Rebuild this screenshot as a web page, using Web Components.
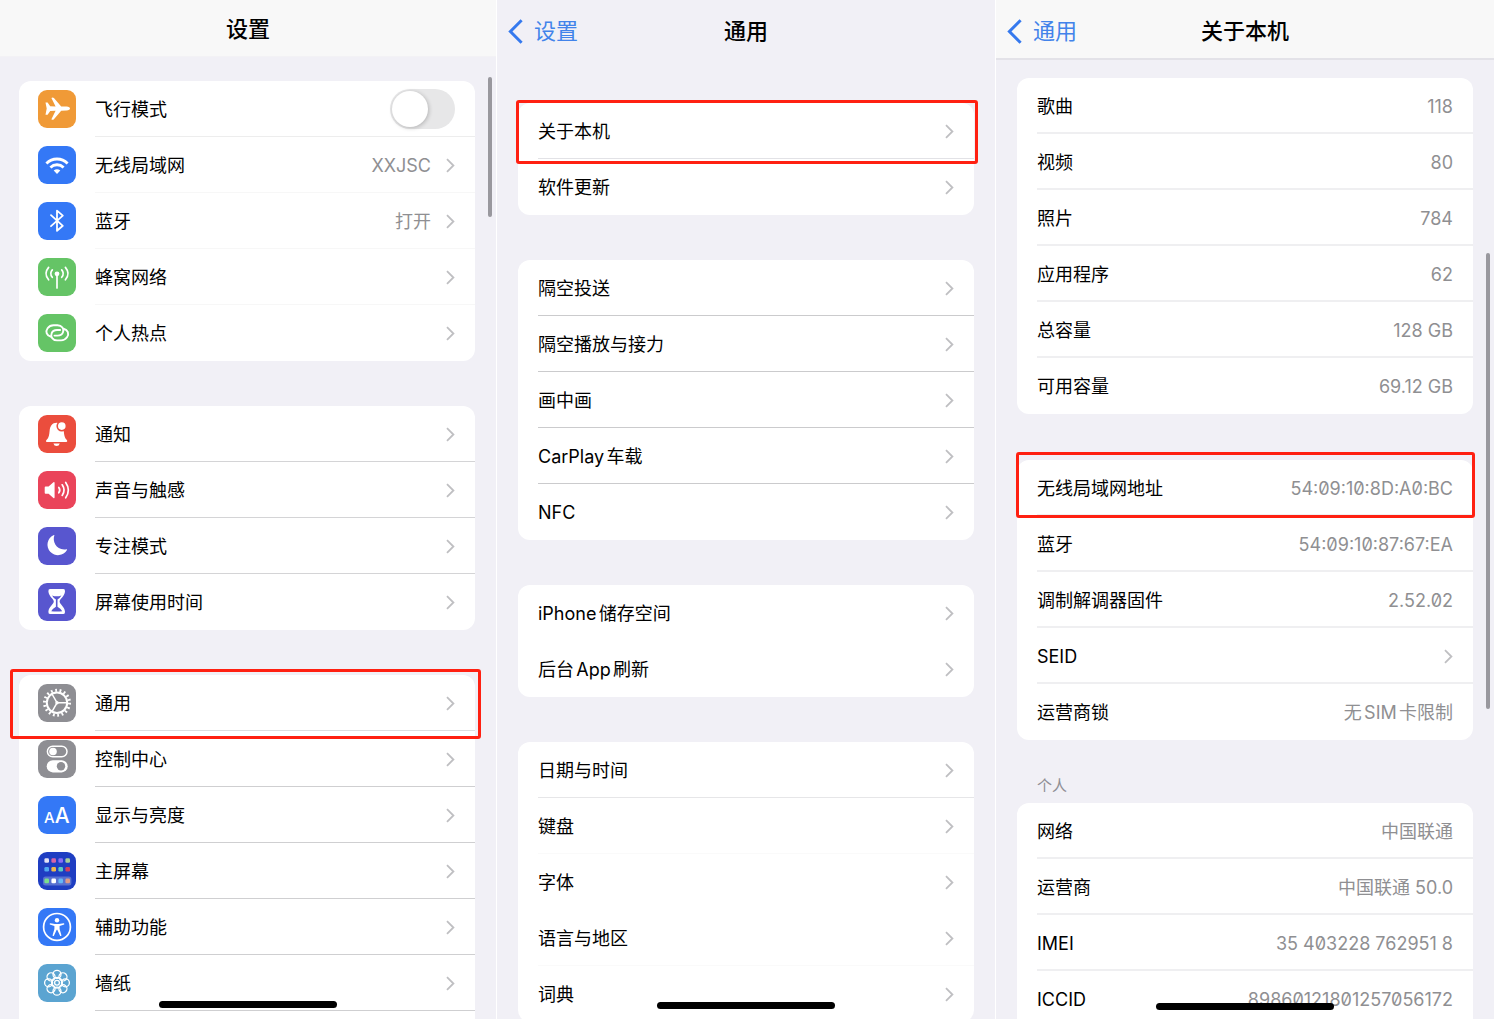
<!DOCTYPE html>
<html lang="zh-CN">
<head>
<meta charset="utf-8">
<meta name="viewport" content="width=device-width, initial-scale=1">
<title>设置</title>
<style>
  html, body { margin: 0; height: 100%; }
  body {
    background: #fff;
    color: #000;
    font-family: Inter, "Noto Sans CJK SC", sans-serif;
    font-size: 18px;
    line-height: 24px;
    text-autospace: normal;
  }
</style>
</head>
<body>
<settings-board>
  <phone-screen style="--side-start:19px; --gap:45px; --top:24px; --bar-bottom:11px; --thumb-top:77px; --thumb-height:140px; --thumb-right:4px">
    <nav-bar slot="bar" tone="plain">设置</nav-bar>
    <list-group style="--line:#f7f7f7">
      <list-row icon="plane" kind="switch" style="--line:#ededed">飞行模式</list-row>
      <list-row icon="wifi" kind="link" value="XXJSC">无线局域网</list-row>
      <list-row icon="bluetooth" kind="link" value="打开">蓝牙</list-row>
      <list-row icon="cellular" kind="link">蜂窝网络</list-row>
      <list-row icon="hotspot" kind="link">个人热点</list-row>
    </list-group>
    <list-group style="--line:#d4d4d6">
      <list-row icon="bell" kind="link">通知</list-row>
      <list-row icon="sound" kind="link">声音与触感</list-row>
      <list-row icon="moon" kind="link">专注模式</list-row>
      <list-row icon="hourglass" kind="link">屏幕使用时间</list-row>
    </list-group>
    <list-group open style="--line:#cfcfd1">
      <list-row icon="gear" kind="link" marked style="--line:#dcdcde; --mark:-6px -6px -8px -9px">通用</list-row>
      <list-row icon="control" kind="link">控制中心</list-row>
      <list-row icon="display" kind="link">显示与亮度</list-row>
      <list-row icon="home" kind="link">主屏幕</list-row>
      <list-row icon="access" kind="link">辅助功能</list-row>
      <list-row icon="wallpaper" kind="link">墙纸</list-row>
      <list-row></list-row>
    </list-group>
  </phone-screen>

  <phone-screen style="--gap:45px; --top:43px; --bar-bottom:10px; --thumb-height:0px">
    <nav-bar slot="bar" tone="clear" back="设置">通用</nav-bar>
    <list-group style="--line:#e2e2e6">
      <list-row kind="link" marked style="--mark:-3px -4px -5px -2px">关于本机</list-row>
      <list-row kind="link">软件更新</list-row>
    </list-group>
    <list-group style="--line:#cbcbcd">
      <list-row kind="link">隔空投送</list-row>
      <list-row kind="link">隔空播放与接力</list-row>
      <list-row kind="link">画中画</list-row>
      <list-row kind="link">CarPlay车载</list-row>
      <list-row kind="link">NFC</list-row>
    </list-group>
    <list-group style="--line:#fff">
      <list-row kind="link">iPhone储存空间</list-row>
      <list-row kind="link">后台App刷新</list-row>
    </list-group>
    <list-group style="--line:#fafafa">
      <list-row kind="link" style="--line:#e6e6e8">日期与时间</list-row>
      <list-row kind="link">键盘</list-row>
      <list-row kind="link" style="--line:#fff">字体</list-row>
      <list-row kind="link">语言与地区</list-row>
      <list-row kind="link">词典</list-row>
    </list-group>
  </phone-screen>

  <phone-screen style="--gap:46px; --top:18px; --bar-bottom:9px; --thumb-top:253px; --thumb-height:456px; --thumb-right:4px; --line:#efeff1; --line-size:2px">
    <nav-bar slot="bar" tone="ruled" back="通用">关于本机</nav-bar>
    <list-group>
      <list-row value="118">歌曲</list-row>
      <list-row value="80">视频</list-row>
      <list-row value="784">照片</list-row>
      <list-row value="62">应用程序</list-row>
      <list-row value="128 GB">总容量</list-row>
      <list-row value="69.12 GB">可用容量</list-row>
    </list-group>
    <list-group>
      <list-row value="54:09:10:8D:A0:BC" code marked style="--mark:-8px -2px -2px -1px">无线局域网地址</list-row>
      <list-row value="54:09:10:87:67:EA" code>蓝牙</list-row>
      <list-row value="2.52.02" code>调制解调器固件</list-row>
      <list-row kind="link">SEID</list-row>
      <list-row value="无SIM卡限制">运营商锁</list-row>
    </list-group>
    <list-group heading="个人" open>
      <list-row value="中国联通">网络</list-row>
      <list-row value="中国联通 50.0">运营商</list-row>
      <list-row value="35 403228 762951 8" code>IMEI</list-row>
      <list-row value="89860121801257056172" code>ICCID</list-row>
    </list-group>
  </phone-screen>
</settings-board>

<script>
const LINK_LOOP = 'M13 22.8C8.6 21.8 7.2 17.6 9.6 14.3C11 12.3 13 11.2 15.5 11.2H19.5C24 11.2 26.3 15 25 18.2C24.2 20.6 22.2 21.6 19.5 21.6H16.5';

const ICONS = {
  plane: ['#f09a37', '<path fill="#fff" d="M7.5 12.4H9.6L12.2 16.2L17.6 16.4L13.4 8Q14.6 6.9 15.9 8L23.2 16.4L28.6 16.6Q32 17.2 32 18.6Q32 20 28.6 20.6L23.2 20.8L15.9 29.3Q14.6 30.3 13.4 29.3L17.6 20.8L12.2 21L9.6 24.8H7.5L8.7 18.6Z"/>'],
  wifi: ['#3478f6', '<g fill="none" stroke="#fff" stroke-width="2.8"><path d="M8.4 17.4A15 15 0 0 1 29.6 17.4"/><path d="M12.4 21.4A9.6 9.6 0 0 1 25.6 21.4"/></g><path fill="#fff" d="M15.7 24.6Q19 21.8 22.3 24.6L19 28Z"/>'],
  bluetooth: ['#3478f6', '<path fill="none" stroke="#fff" stroke-width="1.8" stroke-linejoin="round" stroke-linecap="round" d="M13 13.2L24.8 23.8L19 28.8V8.6L24.8 13.6L13 24.2"/>'],
  cellular: ['#65c466', '<circle cx="19" cy="15.8" r="2.4" fill="#fff"/><g fill="none" stroke="#fff" stroke-width="1.7" stroke-linecap="round"><path d="M19 16V30"/><path d="M10.6 9.4Q5.4 15.6 10.6 21.8M14.3 11.9Q11.2 15.6 14.3 19.3M27.4 9.4Q32.6 15.6 27.4 21.8M23.7 11.9Q26.8 15.6 23.7 19.3"/></g>'],
  hotspot: ['#65c466', `<g fill="none" stroke="#fff" stroke-width="1.9" stroke-linecap="round"><path d="${LINK_LOOP}"/><path transform="rotate(180 19.3 18.8)" d="${LINK_LOOP}"/></g>`],
  bell: ['#eb4d3d', '<path fill="#fff" d="M9 27C7.8 27 7.6 25.8 8.5 25C11 22.6 11.2 20 11.6 16C12 11 14.4 7.8 18.5 7.8C23 7.8 25.4 11 25.8 16C26.1 20 26.4 22.6 28.8 25C29.6 25.8 29.4 27 28.2 27ZM15.4 28.4H21.8Q21 31 18.6 31Q16.2 31 15.4 28.4Z"/><circle cx="23.8" cy="11.1" r="4.6" fill="#fff" stroke="#eb4d3d" stroke-width="1.6"/>'],
  sound: ['#ea445a', '<path fill="#fff" d="M7.6 15.4H10.6L15.4 11.2Q16.6 10.6 16.6 12V26.2Q16.6 27.6 15.4 27L10.6 22.8H7.6Q6.7 22.8 6.7 21.8V16.4Q6.7 15.4 7.6 15.4Z"/><g fill="none" stroke="#fff" stroke-width="1.7" stroke-linecap="round"><path d="M20.8 16.4Q22.8 19.1 20.8 21.8M24.2 13.8Q27.9 19.1 24.2 24.4M27.7 11.4Q33 19.1 27.7 26.8"/></g>'],
  moon: ['#5856cf', '<path fill="#fff" d="M16.4 8.2C14 14.6 18.6 24 28.6 22.2Q29.4 22.2 29 23A10.5 10.5 0 1 1 15.4 8.2Q16.4 7.6 16.4 8.2Z"/>'],
  hourglass: ['#5856cf', '<path fill="#fff" d="M12 6H25.4Q27.2 6 27 8.4C26.6 13.6 21.6 15.6 21.6 18.6C21.6 21.6 26.6 23.4 27 28.8Q27.2 31 25.4 31H12Q10.2 31 10.4 28.8C10.8 23.4 15.8 21.6 15.8 18.6C15.8 15.6 10.8 13.6 10.4 8.4Q10.2 6 12 6Z"/><path fill="#5856cf" d="M14 12.4Q18.7 14.2 23.4 12.4Q22.4 14.4 19.5 16.4V23.8Q22.6 25.6 24.2 28.2Q18.7 29 13.2 28.2Q14.8 25.6 17.9 23.8V16.4Q15 14.4 14 12.4Z"/>'],
  gear: ['#8e8e93', '<g fill="none" stroke="#fff"><circle cx="19" cy="18.8" r="10.2" stroke-width="2"/><circle cx="19" cy="18.8" r="12.5" stroke-width="3" stroke-dasharray="1.8 2.563"/><path stroke-width="1.5" d="M19.5 18.8H29M18.7 18.2L14 10M18.7 19.4L14 27.6"/></g><circle cx="19" cy="18.8" r="1.7" fill="#fff"/>'],
  control: ['#8e8e93', '<rect x="9.4" y="6.2" width="19.6" height="10.6" rx="5.3" fill="none" stroke="#fff" stroke-width="1.5"/><circle cx="15" cy="11.5" r="3.8" fill="#fff"/><rect x="8.7" y="20.2" width="21" height="12.2" rx="6.1" fill="#fff"/><circle cx="23" cy="26.3" r="4.2" fill="#8e8e93"/>'],
  display: ['#3478f6', '<text fill="#fff" x="6" y="27" font-family="Inter, sans-serif" font-weight="500" font-size="15">A<tspan font-size="21">A</tspan></text>'],
  home: ['#1f3ec2', '<rect x="5" y="24.4" width="28.4" height="9" rx="2.5" fill="#5871d0"/>' +
    [['#e4e2f5','#d565a8','#8a6cf5','#a8cf9a'],['#4fa8f0','#efb94e','#5cc9c0','#cf3f62'],['#7be08c','#fff','#66b8f5','#e09a86']]
      .map((row, r) => row.map((c, i) => `<rect x="${6.4 + i * 7}" y="${[6.2, 15, 26.6][r]}" width="4.6" height="4.6" rx="1.3" fill="${c}"/>`).join('')).join('')],
  access: ['#3478f6', '<circle cx="19" cy="18.9" r="13.4" fill="none" stroke="#fff" stroke-width="1.7"/><circle cx="19" cy="12.2" r="2.2" fill="#fff"/><path fill="#fff" d="M12.4 15.3L17 16H21L25.6 15.3Q26.6 15.4 26.2 16.5L21.6 17.9V21L23.4 27.2Q23.3 28.4 22.2 27.9L19.3 21.8H18.7L15.8 27.9Q14.7 28.4 14.6 27.2L16.4 21V17.9L11.8 16.5Q11.4 15.4 12.4 15.3Z"/>'],
  wallpaper: ['#5ba4d1', '<g fill="none" stroke="#fff" stroke-width="1.3">' +
    Array.from({length: 8}, (_, i) => `<circle cx="19" cy="10.4" r="4" transform="rotate(${i * 45} 19 18.8)"/>`).join('') +
    '<circle cx="19" cy="18.8" r="2.4"/><circle cx="19" cy="18.8" r="5.4"/></g>']
};

class Base extends HTMLElement {
  connectedCallback() {
    if (this.shadowRoot) return;
    this.attachShadow({ mode: 'open' }).innerHTML = this.render();
  }
}

customElements.define('settings-board', class extends Base {
  render() {
    return `<style>
      :host { display: grid; grid-template-columns: 496fr 498fr 498fr; gap: 1px; height: 100vh; overflow: hidden; }
    </style><slot></slot>`;
  }
});

customElements.define('phone-screen', class extends Base {
  render() {
    return `<style>
      :host { display: flex; flex-direction: column; position: relative; min-width: 0; overflow: hidden; background: #f1f0f6; }
      main { display: flex; flex-direction: column; gap: var(--gap); padding: var(--top) 21px 0 var(--side-start, 21px); }
      .thumb { position: absolute; right: var(--thumb-right); top: var(--thumb-top); width: 4px; height: var(--thumb-height); border-radius: 2px; background: #99989e; }
      .home { position: absolute; z-index: 3; left: 0; right: 0; bottom: var(--bar-bottom); width: 178px; height: 7px; margin: 0 auto; border-radius: 4px; background: #000; }
    </style>
    <slot name="bar"></slot><main><slot></slot></main><div class="thumb"></div><div class="home"></div>`;
  }
});

customElements.define('nav-bar', class extends Base {
  render() {
    const back = this.getAttribute('back');
    return `<style>
      :host { display: grid; grid-template-columns: 1fr auto 1fr; align-items: center; height: 60px; padding: 2px 11px 0; box-sizing: border-box; font-size: 22px; line-height: 30px; flex: none; }
      :host([tone="plain"]) { height: 57px; background: #f8f8f8; border-bottom: 1px solid #f3f2f5; }
      :host([tone="ruled"]) { background: #f8f8f8; box-shadow: inset 0 -2px #e3e2e8; }
      a { display: flex; align-items: center; gap: 11px; color: #4283ea; text-decoration: none; }
      h1 { grid-column: 2; margin: 0; font-size: 22px; line-height: 30px; font-weight: 500; }
    </style>
    ${back ? `<a href="#"><svg width="15" height="25" viewBox="0 0 15 25" fill="none" stroke="#3579ee" stroke-width="3"><path d="M13.6 1.2L2.4 12.5L13.6 23.8"/></svg><span>${back}</span></a>` : ''}
    <h1><slot></slot></h1>`;
  }
});

customElements.define('list-group', class extends Base {
  render() {
    const heading = this.getAttribute('heading');
    return `<style>
      :host { display: block; }
      h2 { margin: -11px 20px 6px; font-size: 15px; line-height: 22px; font-weight: 400; color: #8f8e94; }
      section { background: #fff; border-radius: 12px; }
      :host([open]) section { border-radius: 12px 12px 0 0; }
      :host(:not([open])) ::slotted(list-row:last-child) { --line: transparent; }
    </style>
    ${heading ? `<h2>${heading}</h2>` : ''}<section><slot></slot></section>`;
  }
});

customElements.define('app-icon', class extends Base {
  render() {
    const [bg, art] = ICONS[this.getAttribute('name')];
    return `<style>
      :host { display: block; width: 38px; height: 38px; flex: none; border-radius: 9px; background: ${bg}; }
      svg { display: block; }
    </style><svg width="38" height="38" viewBox="0 0 38 38" aria-hidden="true">${art}</svg>`;
  }
});

customElements.define('list-row', class extends Base {
  render() {
    const icon = this.getAttribute('icon');
    const kind = this.getAttribute('kind');
    const value = this.getAttribute('value');
    const tag = kind === 'link' ? 'a href="#"' : 'div';
    const label = kind === 'switch' ? '<label class="name" for="toggle"><slot></slot></label>' : '<span class="name"><slot></slot></span>';
    return `<style>
      :host { display: block; position: relative; }
      .row { display: flex; align-items: center; height: 56px; padding-left: ${icon ? 19 : 20}px; color: inherit; text-decoration: none; }
      app-icon { margin-right: 19px; }
      .body { flex: 1; min-width: 0; display: flex; align-items: center; align-self: stretch; padding-right: 20px; background: linear-gradient(var(--line), var(--line)) left bottom / 100% var(--line-size, 1px) no-repeat; }
      .name, .value { padding-top: 2px; white-space: nowrap; }
      .name { flex: 1; }
      .value { color: #8f8f92; }
      :host([code]) .value { font-feature-settings: "zero"; }
      .chevron { margin-left: 15px; flex: none; }
      input { appearance: none; margin: 0; width: 65px; height: 40px; border-radius: 20px; background: #e7e7e8; display: flex; align-items: center; padding: 0 2px; box-sizing: border-box; }
      input::before { content: ""; width: 36px; height: 36px; border-radius: 50%; background: #fff; box-shadow: 1px 1px 4px rgba(0,0,0,.22); }
      input:checked { background: #65c466; justify-content: flex-end; }
      .mark { position: absolute; z-index: 2; inset: var(--mark); border: 3px solid #ff2011; border-radius: 3px; pointer-events: none; }
    </style>
    <${tag} class="row">
      ${icon ? `<app-icon name="${icon}"></app-icon>` : ''}
      <div class="body">
        ${label}
        ${value ? `<span class="value">${value}</span>` : ''}
        ${kind === 'switch' ? '<input id="toggle" type="checkbox" role="switch">' : ''}
        ${kind === 'link' ? '<svg class="chevron" width="9" height="15" viewBox="0 0 9 15" fill="none" stroke="#bfbfc2" stroke-width="1.8"><path d="M1 1.2L7.4 7.5L1 13.8"/></svg>' : ''}
      </div>
    </${tag.split(' ')[0]}>
    ${this.hasAttribute('marked') ? '<div class="mark"></div>' : ''}`;
  }
});
</script>
</body>
</html>
